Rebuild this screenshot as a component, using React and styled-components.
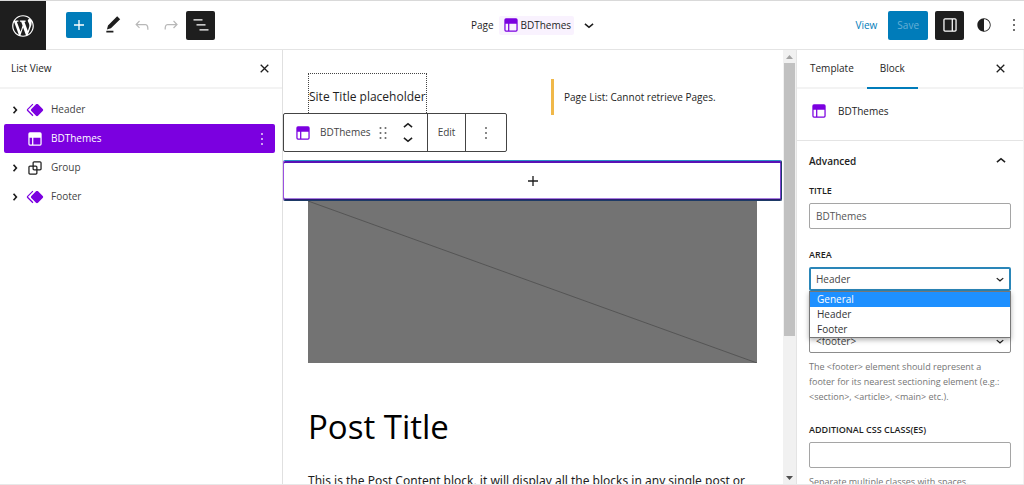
import React from 'react';
import styled, { createGlobalStyle } from 'styled-components';

const GlobalStyle = createGlobalStyle`
  *, *::before, *::after {
    box-sizing: border-box;
  }

  body {
    margin: 0;
    background: #fff;
    color: #1e1e1e;
    font: 10px/15px 'Open Sans', 'Noto Sans', sans-serif;
  }

  button, input, select {
    font: inherit;
    color: inherit;
    margin: 0;
  }

  h1, h2, p, ul {
    margin: 0;
    padding: 0;
  }
`;

const paths = {
  wordpress:
    'M20 10c0-5.51-4.49-10-10-10C4.48 0 0 4.49 0 10c0 5.52 4.48 10 10 10 5.51 0 10-4.48 10-10zM7.78 15.37L4.37 6.22c.55-.02 1.17-.08 1.17-.08.5-.06.44-1.13-.06-1.11 0 0-1.45.11-2.37.11-.18 0-.37 0-.58-.01C4.12 2.69 6.87 1.11 10 1.11c2.33 0 4.45.87 6.05 2.34-.68-.11-1.65.39-1.65 1.58 0 .74.45 1.36.9 2.1.35.61.55 1.36.55 2.46 0 1.49-1.4 5-1.4 5l-3.03-8.37c.54-.02.82-.17.82-.17.5-.05.44-1.25-.06-1.22 0 0-1.44.12-2.38.12-.87 0-2.33-.12-2.33-.12-.5-.03-.56 1.2-.06 1.22l.92.08 1.26 3.41zM17.41 10c.24-.64.74-1.87.43-4.25.7 1.29 1.05 2.71 1.05 4.25 0 3.29-1.73 6.24-4.4 7.78.97-2.59 1.94-5.2 2.92-7.78zM6.1 18.09C3.12 16.65 1.11 13.53 1.11 10c0-1.3.23-2.48.72-3.59C3.25 10.3 4.67 14.2 6.1 18.09zm4.03-6.63l2.58 6.98c-.86.29-1.76.45-2.71.45-.79 0-1.57-.11-2.29-.33.81-2.38 1.62-4.74 2.42-7.1z',
  plus: 'M18 11.2h-5.2V6h-1.6v5.2H6v1.6h5.2V18h1.6v-5.2H18z',
  edit: 'M20.6 5L17 1.500 6 12.500l-1.300 4.800 4.800-1.300L20.600 5zM4 21h8.500v-2H4v2z',
  undo: 'M18.3 11.7c-.6-.6-1.4-.9-2.3-.9H6.7l2.9-3.3-1.1-1-4.5 5L8.5 16l1-1-2.7-2.7H16c.5 0 .9.2 1.3.5 1 1 1 3.4 1 4.5v.3h1.5v-.2c0-1.5 0-4.3-1.5-5.7z',
  redo: 'M15.6 6.5l-1.1 1 2.9 3.3H8c-.9 0-1.7.3-2.3.9-1.4 1.5-1.4 4.2-1.4 5.6v.2h1.5v-.3c0-1.1 0-3.5 1-4.5.3-.3.7-.5 1.3-.5h9.2L14.5 15l1.1 1.1 4.6-4.6-4.6-5z',
  listView:
    'M13.8 5.2H3v1.5h10.8V5.2zm-3.6 12v1.5H21v-1.5H10.2zm7.2-6H6.6v1.5h10.8v-1.5z',
  layout:
    'M18.5 10.5H10v8h8a.5.5 0 00.5-.5v-7.5zm-10 0h-3V18a.5.5 0 00.5.5h2.5v-8zM6 4h12a2 2 0 012 2v12a2 2 0 01-2 2H6a2 2 0 01-2-2V6a2 2 0 012-2z',
  symbol:
    'M21.3 10.8l-5.6-5.6c-.7-.7-1.8-.7-2.5 0l-5.6 5.6c-.7.7-.7 1.8 0 2.5l5.6 5.6c.3.3.8.5 1.2.5s.9-.2 1.2-.5l5.6-5.6c.8-.7.8-1.9.1-2.5zm-17.6 1L10 5.5l-1-1-6.3 6.3c-.7.7-.7 1.8 0 2.5L9 19.5l1.1-1.1-6.3-6.3c-.2 0-.2-.2-.1-.3z',
  group:
    'M18 4h-7c-1.1 0-2 .9-2 2v3H6c-1.1 0-2 .9-2 2v7c0 1.1.9 2 2 2h7c1.1 0 2-.9 2-2v-3h3c1.1 0 2-.9 2-2V6c0-1.1-.9-2-2-2zm-4.5 14c0 .3-.2.5-.5.5H6c-.3 0-.5-.2-.5-.5v-7c0-.3.2-.5.5-.5h3V13c0 1.1.9 2 2 2h2.5v3zm0-4.5H11c-.3 0-.5-.2-.5-.5v-2.5H13c.3 0 .5.2.5.5v2.5zm5-.5c0 .3-.2.5-.5.5h-3V11c0-1.1-.9-2-2-2h-2.5V6c0-.3.2-.5.5-.5h7c.3 0 .5.2.5.5v7z',
  drawer:
    'M18 4H6c-1.1 0-2 .9-2 2v12c0 1.1.9 2 2 2h12c1.1 0 2-.9 2-2V6c0-1.1-.9-2-2-2zm-4 14.5H6c-.3 0-.5-.2-.5-.5V6c0-.3.2-.5.5-.5h8v13zm4.5-.5c0 .3-.2.5-.5.5h-2.5v-13H18c.3 0 .5.2.5.5v12z',
  styles:
    'M12 4c-4.4 0-8 3.6-8 8v.1c0 4.1 3.2 7.5 7.2 7.9h.8c4.4 0 8-3.6 8-8s-3.6-8-8-8zm0 15V5c3.900 0 7 3.100 7 7s-3.100 7-7 7z',
  close:
    'M12 13.300l4.700 4.700 1.300-1.300-4.700-4.700L18 7.300 16.700 6 12 10.700 7.300 6 6 7.300l4.700 4.700L6 16.700 7.300 18z',
  more: 'M13 19h-2v-2h2v2zm0-6h-2v-2h2v2zm0-6h-2V5h2v2z',
  drag: 'M8 7h2V5H8v2zm0 6h2v-2H8v2zm0 6h2v-2H8v2zm6-14v2h2V5h-2zm0 8h2v-2h-2v2zm0 6h2v-2h-2v2z',
  down: 'M17.5 11.4L12 16l-5.5-4.6 1.2-1.4L12 13.6l4.3-3.6 1.2 1.4z',
  up: 'M6.5 12.6L12 8l5.5 4.6-1.2 1.4L12 10.4 7.7 14l-1.2-1.4z',
  right: 'M11 7.500L9.500 8.800l2.900 3.200-2.900 3.200L11 16.500l4-4.500z',
};

const Icon = ({ name, size = 20, viewBox = '0 0 24 24' }) => (
  <Svg width={size} height={size} viewBox={viewBox} aria-hidden="true">
    <path d={paths[name]} />
  </Svg>
);

const Svg = styled.svg`
  display: block;
  flex: none;
  fill: currentColor;
`;

const Page = styled.div`
  display: flex;
  flex-direction: column;
  height: 100vh;
  overflow: hidden;
  border-top: 1px solid #d9d9d9;
  border-bottom: 1px solid #e8e8e8;
`;

const Header = styled.header`
  display: flex;
  flex: none;
  height: 49px;
`;

const Logo = styled.a`
  display: grid;
  place-items: center;
  width: 46px;
  background: #1e1e1e;
  color: #fff;
`;

const HeaderBar = styled.div`
  flex: 1;
  display: grid;
  grid-template-columns: 1fr auto 1fr;
  align-items: center;
  border-bottom: 1px solid #e4e4e4;
`;

const Tools = styled.div`
  display: flex;
  align-items: center;
  padding-left: 20px;
`;

const HistoryTools = styled.div`
  display: flex;
  gap: 9px;
  padding: 0 5px 0 11px;
`;

const Actions = styled.div`
  display: flex;
  align-items: center;
  justify-content: flex-end;
  gap: 7px;
`;

const IconButton = styled.button`
  display: grid;
  place-items: center;
  flex: none;
  min-width: ${(p) => p.$size || 20}px;
  height: ${(p) => p.$size || 20}px;
  padding: 0;
  border: 0;
  border-radius: 2px;
  background: ${(p) => p.$bg || 'none'};
  color: ${(p) => p.$color || 'inherit'};
`;

const SaveButton = styled.button`
  height: 29px;
  padding: 0 9px;
  border: 0;
  border-radius: 2px;
  background: #007cba;
  color: #66b0d6;
`;

const ViewLink = styled.a`
  color: #007cba;
  text-decoration: none;
  margin-right: 4px;
`;

const DocumentTitle = styled.h1`
  display: flex;
  align-items: center;
  gap: 5px;
  font-size: 10px;
  font-weight: 400;
`;

const TemplateName = styled.span`
  display: flex;
  align-items: center;
  height: 19px;
  padding: 0 3px 0 2px;
  border-radius: 2px;
  background: #f9f2fe;

  svg {
    color: #7b00e0;
  }
`;

const Body = styled.div`
  display: flex;
  flex: 1;
  min-height: 0;
`;

const ListPanel = styled.aside`
  flex: none;
  width: 283px;
  border-right: 1px solid #e0e0e0;
`;

const PanelHeader = styled.div`
  display: flex;
  align-items: center;
  justify-content: space-between;
  height: 39px;
  padding: 0 8px 0 11px;
  border-bottom: 2px solid #f3f3f3;
`;

const PanelTitle = styled.h2`
  font-size: 10px;
  font-weight: 500;
`;

const Tree = styled.ul`
  padding: 6px 7px 0 4px;
  list-style: none;
`;

const TreeItem = styled.li`
  display: flex;
  align-items: center;
  height: 29px;
  padding: 0 3px 0 1px;
  border-radius: 2px;
  background: ${(p) => (p.$selected ? '#7b00e0' : 'none')};
  color: ${(p) => (p.$selected ? '#fff' : '#1e1e1e')};
`;

const Expander = styled.span`
  width: 20px;
`;

const BlockIcon = styled.span`
  color: ${(p) => (p.$accent ? '#7b00e0' : 'inherit')};
`;

const BlockLink = styled.a`
  flex: 1;
  padding-left: 6px;
  color: ${(p) => (p.$selected ? '#fff' : '#444')};
  text-decoration: none;
`;

const Canvas = styled.main`
  flex: 1;
  min-width: 0;
  overflow: hidden;
  padding-right: 1px;
`;

const SiteHeader = styled.div`
  display: grid;
  grid-template-columns: 243px 1fr;
  align-items: start;
  height: 110px;
  padding: 23px 25px 0;
`;

const SiteTitle = styled.div`
  justify-self: start;
  height: 48px;
  border: 1px dotted #444;
  font-size: 12px;
  line-height: 46px;
`;

const Notice = styled.p`
  display: flex;
  align-items: center;
  height: 36px;
  margin-top: 6px;
  padding-left: 10px;
  border-left: 3px solid #f0b849;
`;

const SelectedBlock = styled.section`
  position: relative;
  display: grid;
  place-items: center;
  height: 41px;
  border: 1px solid #1d3a66;
  border-top-color: #2b8fc4;
  border-left-color: #9a50e0;
  border-radius: 2px;
  box-shadow: inset 0 2px #5a10b5, inset 0 -1px #2b1a70, inset -1px 0 #7b3fd0,
    inset 0 -2px #a77be0;
`;

const BlockToolbar = styled.div`
  position: absolute;
  left: -1px;
  bottom: calc(100% + 9px);
  display: flex;
  height: 39px;
  border: 1px solid #444;
  border-radius: 2px;
  background: #fff;
  color: #444;
`;

const ToolbarGroup = styled.div`
  display: flex;
  align-items: center;
  padding: 0 9px;

  & + & {
    padding: 0 10px;
    border-left: 1px solid #444;
  }
`;

const ToolbarLabel = styled.span`
  padding: 0 2px 0 7px;
`;

const Movers = styled.div`
  display: grid;
  grid-auto-rows: 13px;
  align-items: center;
  margin-left: 5px;
  color: #1e1e1e;
`;

const TextButton = styled.button`
  padding: 0;
  border: 0;
  background: none;
`;

const Article = styled.article`
  padding: 0 25px;
`;

const FeaturedImage = styled.svg`
  display: block;
  width: 100%;
  height: 162px;
  background: #737373;
`;

const PostTitle = styled.h2`
  margin: 40px 0 20px;
  font-size: 33px;
  font-weight: 400;
  line-height: 48px;
  color: #000;
`;

const PostText = styled.p`
  font-family: 'Noto Sans', 'Open Sans', sans-serif;
  font-size: 12px;
  line-height: 20px;
  white-space: nowrap;
`;

const Scrollbar = styled.div`
  display: flex;
  flex: none;
  flex-direction: column;
  align-items: center;
  width: 13px;
  background: #f1f1f1;
  color: #505050;
`;

const Thumb = styled.div`
  width: 11px;
  height: 273px;
  background: #c1c1c1;
`;

const ArrowBox = styled.span`
  display: grid;
  place-items: center;
  height: 13px;
  color: ${(p) => (p.$disabled ? '#a3a3a3' : '#505050')};
`;

const Track = styled.div`
  flex: 1;
`;

const Settings = styled.aside`
  flex: none;
  width: 228px;
  border-left: 1px solid #e4e4e4;
  border-right: 1px solid #f3f3f3;
  overflow: hidden;
`;

const Tabs = styled.div`
  display: flex;
  align-items: stretch;
  height: 39px;
  padding-right: 13px;
  border-bottom: 2px solid #f3f3f3;
`;

const Tab = styled.button`
  height: 39px;
  padding: 0 13px;
  border: 0;
  border-bottom: 2px solid ${(p) => (p.$active ? '#007cba' : 'transparent')};
  background: none;
  font-weight: 500;
`;

const CloseTab = styled.div`
  display: flex;
  align-items: center;
  margin-left: auto;
`;

const BlockCard = styled.div`
  display: flex;
  align-items: center;
  gap: 9px;
  height: 52px;
  padding: 0 12px 7px;
  border-bottom: 1px solid #e4e4e4;
  font-weight: 500;

  svg {
    color: #7b00e0;
  }
`;

const SectionToggle = styled.button`
  display: flex;
  align-items: center;
  justify-content: space-between;
  width: 100%;
  height: 40px;
  margin-bottom: 2px;
  padding: 0 12px;
  border: 0;
  background: none;
  font-weight: 600;
`;

const Field = styled.div`
  position: relative;
  padding: 0 12px;
  margin-bottom: 18px;
`;

const CoveredField = styled(Field)`
  padding-top: 20px;
`;

const Label = styled.label`
  display: block;
  margin-bottom: 5px;
  font-size: 9px;
  font-weight: 600;
  line-height: 15px;
  text-transform: uppercase;
`;

const Input = styled.input`
  display: block;
  width: 100%;
  height: 26px;
  padding: 0 6px;
  border: 1px solid #a5a5a5;
  border-radius: 2px;
  background: #fff;
  color: #555;
`;

const SelectWrap = styled.div`
  position: relative;

  svg {
    position: absolute;
    right: 3px;
    top: 4px;
    pointer-events: none;
  }
`;

const Select = styled.select`
  display: block;
  appearance: none;
  width: 100%;
  height: 24px;
  padding: 0 6px;
  border: 1px solid #8c8c8c;
  border-radius: 2px;
  background: #fff;
  color: #444;
  outline: none;
  ${(p) => p.$open && 'border: 2px solid #2a86b8; padding: 0 5px;'}
`;

const Menu = styled.ul`
  position: absolute;
  z-index: 1;
  top: 100%;
  left: 0;
  right: 0;
  border: 1px solid #777;
  background: #fff;
  box-shadow: 0 2px 5px rgba(0, 0, 0, 0.3);
  list-style: none;
`;

const MenuItem = styled.li`
  padding: 0 7px;
  line-height: 15px;
  background: ${(p) => (p.$active ? '#1e90ff' : '#fff')};
  color: ${(p) => (p.$active ? '#fff' : '#333')};
`;

const Help = styled.p`
  margin-top: 6px;
  padding-right: 8px;
  font-size: 9px;
  line-height: 15px;
  color: #757575;
`;

const blocks = [
  { name: 'Header', icon: 'symbol', accent: true, expandable: true },
  { name: 'BDThemes', icon: 'layout', selected: true },
  { name: 'Group', icon: 'group', expandable: true },
  { name: 'Footer', icon: 'symbol', accent: true, expandable: true },
];

const areas = ['General', 'Header', 'Footer'];

const EditorHeader = () => (
  <Header>
    <Logo href="#" aria-label="WordPress">
      <Icon name="wordpress" size={26} viewBox="-2 -2 24 24" />
    </Logo>
    <HeaderBar>
      <Tools>
        <IconButton $size={26} $bg="#007cba" $color="#fff" aria-label="Add block">
          <Icon name="plus" />
        </IconButton>
        <HistoryTools>
          <IconButton aria-label="Tools">
            <Icon name="edit" />
          </IconButton>
          <IconButton $color="#b8b8b8" aria-label="Undo">
            <Icon name="undo" />
          </IconButton>
          <IconButton $color="#b8b8b8" aria-label="Redo">
            <Icon name="redo" />
          </IconButton>
        </HistoryTools>
        <IconButton $size={29} $bg="#1e1e1e" $color="#fff" aria-label="List view">
          <Icon name="listView" />
        </IconButton>
      </Tools>
      <DocumentTitle>
        Page
        <TemplateName>
          <Icon name="layout" />
          BDThemes
        </TemplateName>
        <IconButton aria-label="Template details">
          <Icon name="down" />
        </IconButton>
      </DocumentTitle>
      <Actions>
        <ViewLink href="#">View</ViewLink>
        <SaveButton>Save</SaveButton>
        <IconButton $size={29} $bg="#1e1e1e" $color="#fff" aria-label="Settings">
          <Icon name="drawer" />
        </IconButton>
        <IconButton $size={26} aria-label="Styles">
          <Icon name="styles" />
        </IconButton>
        <IconButton aria-label="Options">
          <Icon name="more" />
        </IconButton>
      </Actions>
    </HeaderBar>
  </Header>
);

const ListView = () => (
  <ListPanel>
    <PanelHeader>
      <PanelTitle>List View</PanelTitle>
      <IconButton aria-label="Close list view">
        <Icon name="close" size={17} />
      </IconButton>
    </PanelHeader>
    <Tree>
      {blocks.map((block) => (
        <TreeItem key={block.name} $selected={block.selected}>
          <Expander>{block.expandable && <Icon name="right" />}</Expander>
          <BlockIcon $accent={block.accent}>
            <Icon name={block.icon} />
          </BlockIcon>
          <BlockLink href="#" $selected={block.selected}>
            {block.name}
          </BlockLink>
          {block.selected && (
            <IconButton aria-label="Block options">
              <Icon name="more" />
            </IconButton>
          )}
        </TreeItem>
      ))}
    </Tree>
  </ListPanel>
);

const Toolbar = () => (
  <BlockToolbar>
    <ToolbarGroup>
      <BlockIcon $accent>
        <Icon name="layout" />
      </BlockIcon>
      <ToolbarLabel>BDThemes</ToolbarLabel>
      <Icon name="drag" />
      <Movers>
        <Icon name="up" />
        <Icon name="down" />
      </Movers>
    </ToolbarGroup>
    <ToolbarGroup>
      <TextButton>Edit</TextButton>
    </ToolbarGroup>
    <ToolbarGroup>
      <IconButton aria-label="Options">
        <Icon name="more" />
      </IconButton>
    </ToolbarGroup>
  </BlockToolbar>
);

const EditorCanvas = () => (
  <Canvas>
    <SiteHeader>
      <SiteTitle>Site Title placeholder</SiteTitle>
      <Notice>Page List: Cannot retrieve Pages.</Notice>
    </SiteHeader>
    <SelectedBlock>
      <Toolbar />
      <IconButton aria-label="Add block">
        <Icon name="plus" />
      </IconButton>
    </SelectedBlock>
    <Article>
      <FeaturedImage viewBox="0 0 100 100" preserveAspectRatio="none">
        <line
          x1="0"
          y1="0"
          x2="100"
          y2="100"
          stroke="#555"
          vectorEffect="non-scaling-stroke"
        />
      </FeaturedImage>
      <PostTitle>Post Title</PostTitle>
      <PostText>
        This is the Post Content block, it will display all the blocks in any single post or
      </PostText>
    </Article>
  </Canvas>
);

const CanvasScrollbar = () => (
  <Scrollbar>
    <ArrowBox $disabled>
      <Svg width="7" height="4" viewBox="0 0 7 4">
        <path d="M0 4l3.500-4L7 4z" />
      </Svg>
    </ArrowBox>
    <Thumb />
    <Track />
    <ArrowBox>
      <Svg width="7" height="4" viewBox="0 0 7 4">
        <path d="M0 0l3.500 4L7 0z" />
      </Svg>
    </ArrowBox>
  </Scrollbar>
);

const SettingsPanel = () => (
  <Settings>
    <Tabs>
      <Tab>Template</Tab>
      <Tab $active>Block</Tab>
      <CloseTab>
        <IconButton aria-label="Close settings">
          <Icon name="close" size={17} />
        </IconButton>
      </CloseTab>
    </Tabs>
    <BlockCard>
      <Icon name="layout" />
      BDThemes
    </BlockCard>
    <SectionToggle>
      Advanced
      <Icon name="up" />
    </SectionToggle>
    <Field>
      <Label htmlFor="title">Title</Label>
      <Input id="title" defaultValue="BDThemes" />
    </Field>
    <Field>
      <Label htmlFor="area">Area</Label>
      <SelectWrap>
        <Select id="area" defaultValue="Header" $open>
          {areas.map((area) => (
            <option key={area}>{area}</option>
          ))}
        </Select>
        <Icon name="down" size={16} />
        <Menu>
          {areas.map((area) => (
            <MenuItem key={area} $active={area === 'General'}>
              {area}
            </MenuItem>
          ))}
        </Menu>
      </SelectWrap>
    </Field>
    <CoveredField>
      <SelectWrap>
        <Select aria-label="HTML element">
          <option>{'<footer>'}</option>
        </Select>
        <Icon name="down" size={16} />
      </SelectWrap>
      <Help>
        {
          'The <footer> element should represent a footer for its nearest sectioning element (e.g.: <section>, <article>, <main> etc.).'
        }
      </Help>
    </CoveredField>
    <Field>
      <Label htmlFor="classes">Additional CSS class(es)</Label>
      <Input id="classes" />
      <Help>Separate multiple classes with spaces.</Help>
    </Field>
  </Settings>
);

export default function App() {
  return (
    <>
      <GlobalStyle />
      <Page>
        <EditorHeader />
        <Body>
          <ListView />
          <EditorCanvas />
          <CanvasScrollbar />
          <SettingsPanel />
        </Body>
      </Page>
    </>
  );
}
